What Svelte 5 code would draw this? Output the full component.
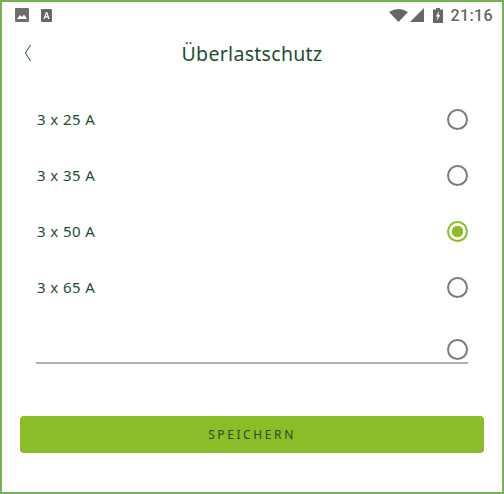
<script>
  const options = ['3 x 25 A', '3 x 35 A', '3 x 50 A', '3 x 65 A'];
  let selected = $state('3 x 50 A');
</script>

<div class="frame">
  <div class="status">
    <svg class="ic-img" viewBox="0 0 14 14" width="14" height="14"><rect width="14" height="14" rx="1" fill="#6e6e6e"/><path d="M2 11l3-4 2 2 2-2.5 3 4.500z" fill="#fff"/></svg>
    <svg class="ic-a" viewBox="0 0 11 13" width="11" height="13"><rect width="11" height="13" rx="1" fill="#666"/><path d="M2.500 10L5 3h1.200l2.400 7H7.200l-.4-1.500H4.300L3.800 10zM4.700 7.300h1.700L5.600 4.800z" fill="#fff"/></svg>
    <span class="spacer"></span>
    <svg viewBox="0 0 20 14" width="20" height="14"><path d="M0 4Q9.500-2 19 4L9.500 14z" fill="#666"/></svg>
    <svg class="ic-sig" viewBox="0 0 14 14" width="14" height="14"><path d="M14 0V14H0z" fill="#666"/></svg>
    <svg class="ic-bat" viewBox="0 0 10 15" width="10" height="15"><path d="M3 0h4v1.500h3V15H0V1.500h3z" fill="#666"/><path d="M6 3L2.800 8.500h1.800L4 12.500 7.200 7H5.400z" fill="#fff"/></svg>
    <span class="time">21:16</span>
  </div>

  <header class="head">
    <svg class="back" viewBox="0 0 8 18" width="8" height="18"><path d="M6.500 1L1.500 9l5 8" fill="none" stroke="#1c5230" stroke-width="1"/></svg>
    <h1>Überlastschutz</h1>
  </header>

  <div class="list">
    {#each options as o}
      <button class="row" onclick={() => (selected = o)}>
        <span class="label">{o}</span>
        <span class="radio" class:on={selected === o}></span>
      </button>
    {/each}
    <div class="row custom">
      <span class="radio"></span>
    </div>
  </div>

  <button class="save">SPEICHERN</button>
</div>

<style>
  :global(body) { margin: 0; background: #fff; }
  .frame {
    box-sizing: border-box;
    width: 504px;
    height: 494px;
    border: 2px solid #78b256;
    font-family: "Noto Sans", "Open Sans", sans-serif;
    color: #1c4f2c;
    display: flex;
    flex-direction: column;
    background: #fff;
  }
  .status {
    height: 26px;
    display: flex;
    align-items: center;
    padding: 0 9px 0 13px;
    flex: none;
  }
  .ic-a { margin-left: 12px; }
  .spacer { flex: 1; }
  .ic-sig { margin-left: 1px; }
  .ic-bat { margin-left: 9px; }
  .time {
    margin-left: 7px;
    font-family: Roboto, sans-serif;
    font-size: 16px;
    font-weight: 500;
    letter-spacing: 0.4px;
    color: #666;
  }
  .head {
    position: relative;
    height: 50px;
    display: flex;
    align-items: center;
    justify-content: center;
    flex: none;
  }
  .back { position: absolute; left: 22px; top: 16px; }
  h1 {
    margin: 0;
    font-size: 19.500px;
    font-weight: 400;
    letter-spacing: 0.3px;
  }
  .list {
    display: flex;
    flex-direction: column;
    padding: 13px 34px 0 34px;
  }
  .row {
    all: unset;
    box-sizing: border-box;
    height: 56px;
    display: flex;
    align-items: center;
    justify-content: space-between;
    font-size: 15px;
    letter-spacing: 0.4px;
  }
  .label { margin-left: 1px; }
  .radio {
    box-sizing: border-box;
    width: 21px;
    height: 21px;
    border-radius: 50%;
    border: 2px solid #7a7a7a;
    background: #fff;
  }
  .radio.on {
    border-color: #8abd28;
    background: radial-gradient(circle, #8abd28 0 5.500px, #fff 6px);
  }
  .custom {
    justify-content: flex-end;
    align-items: flex-end;
    height: 49px;
    border-bottom: 2px solid #b0b0b0;
  }
  .custom .radio { margin-bottom: 2px; }
  .save {
    margin: 52px 18px 0 18px;
    height: 37px;
    border: 0;
    border-radius: 4px;
    background: #8abd28;
    color: #1c4f2c;
    font-family: inherit;
    font-size: 12px;
    letter-spacing: 2.600px;
    flex: none;
    padding: 0;
  }
</style>
